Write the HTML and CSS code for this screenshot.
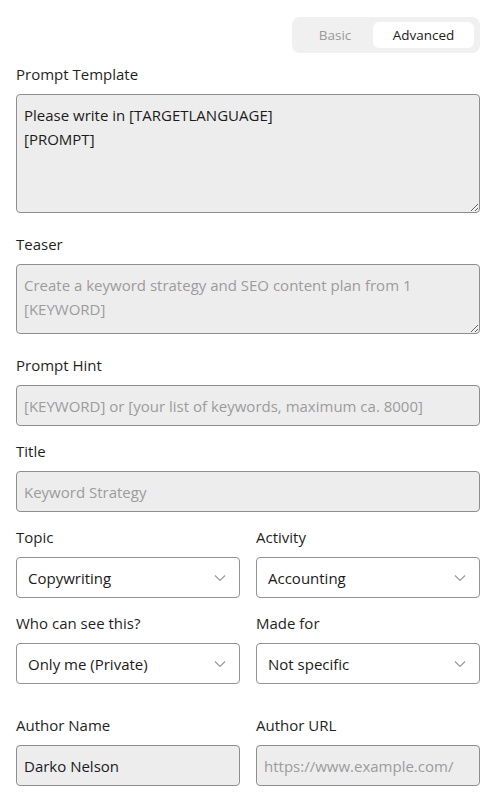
FILE: index.html
```html
<!DOCTYPE html>
<html lang="en">
<head>
<meta charset="utf-8">
<title>Prompt form</title>
<link rel="stylesheet" href="styles.css">
</head>
<body>
<div class="page">
  <div class="toggle-row">
    <div class="toggle">
      <span class="tab">Basic</span>
      <span class="tab active">Advanced</span>
    </div>
  </div>

  <div class="group group-area">
    <label class="label">Prompt Template</label>
    <textarea class="field area area-lg" readonly>Please write in [TARGETLANGUAGE]
[PROMPT]</textarea>
  </div>

  <div class="group group-area">
    <label class="label">Teaser</label>
    <textarea class="field area area-sm" readonly placeholder="Create a keyword strategy and SEO content plan from 1 [KEYWORD]"></textarea>
  </div>

  <div class="group">
    <label class="label">Prompt Hint</label>
    <input class="field input" readonly placeholder="[KEYWORD] or [your list of keywords, maximum ca. 8000]">
  </div>

  <div class="group">
    <label class="label">Title</label>
    <input class="field input" readonly placeholder="Keyword Strategy">
  </div>

  <div class="group row">
    <div class="col">
      <label class="label">Topic</label>
      <div class="select"><span>Copywriting</span><svg class="chev" viewBox="0 0 12 8"><path d="M1 1.5 L6 6.5 L11 1.5"/></svg></div>
    </div>
    <div class="col">
      <label class="label">Activity</label>
      <div class="select"><span>Accounting</span><svg class="chev" viewBox="0 0 12 8"><path d="M1 1.5 L6 6.5 L11 1.5"/></svg></div>
    </div>
  </div>

  <div class="group row group-last">
    <div class="col">
      <label class="label">Who can see this?</label>
      <div class="select"><span>Only me (Private)</span><svg class="chev" viewBox="0 0 12 8"><path d="M1 1.5 L6 6.5 L11 1.5"/></svg></div>
    </div>
    <div class="col">
      <label class="label">Made for</label>
      <div class="select"><span>Not specific</span><svg class="chev" viewBox="0 0 12 8"><path d="M1 1.5 L6 6.5 L11 1.5"/></svg></div>
    </div>
  </div>

  <div class="group row">
    <div class="col">
      <label class="label">Author Name</label>
      <input class="field input" readonly value="Darko Nelson">
    </div>
    <div class="col">
      <label class="label">Author URL</label>
      <input class="field input" readonly placeholder="https://www.example.com/">
    </div>
  </div>
</div>
</body>
</html>
```

FILE: styles.css
```css
* { box-sizing: border-box; }
html, body { margin: 0; padding: 0; background: #ffffff; }
body {
  font-family: "Open Sans", "Noto Sans", sans-serif;
  font-size: 15px;
  color: #1b1b1b;
}
.page {
  padding: 17px 16px 0 16px;
  display: flex;
  flex-direction: column;
}
.toggle-row {
  display: flex;
  justify-content: flex-end;
  margin-bottom: 11px;
}
.toggle {
  display: flex;
  background: #f0f0f0;
  border-radius: 8px;
  padding: 5px 6px 5px 5px;
  height: 36px;
}
.tab {
  display: flex;
  align-items: center;
  justify-content: center;
  height: 26px;
  font-size: 13.5px;
  color: #9a9a9a;
  border-radius: 6px;
}
.tab:first-child { width: 76px; }
.tab.active {
  width: 101px;
  background: #ffffff;
  color: #1b1b1b;
}
.group { display: flex; flex-direction: column; margin-bottom: 15px; }
.group-area { margin-bottom: 21px; }
.group-last { margin-bottom: 31px; }
.row { flex-direction: row; gap: 16px; }
.col { flex: 1; display: flex; flex-direction: column; min-width: 0; }
.label {
  display: block;
  line-height: 20px;
  height: 20px;
  margin-bottom: 10px;
  color: #1f1f1f;
}
.field {
  font: inherit;
  width: 100%;
  background: #ededed;
  border: 1px solid #8e8e8e;
  border-radius: 4px;
  color: #1b1b1b;
  outline: none;
  margin: 0;
}
.field::placeholder { color: #9c9c9c; opacity: 1; }
.area {
  display: block;
  padding: 8px 7px;
  line-height: 24px;
  resize: vertical;
}
.area-lg { height: 119px; }
.area-sm { height: 70px; }
.input {
  height: 41px;
  padding: 0 7px;
}
.select {
  height: 41px;
  border: 1px solid #939393;
  border-radius: 4px;
  background: #ffffff;
  display: flex;
  align-items: center;
  justify-content: space-between;
  padding: 0 13px 0 11px;
}
.chev {
  width: 12px;
  height: 8px;
  fill: none;
  stroke: #9a9a9a;
  stroke-width: 1.2;
}
```
